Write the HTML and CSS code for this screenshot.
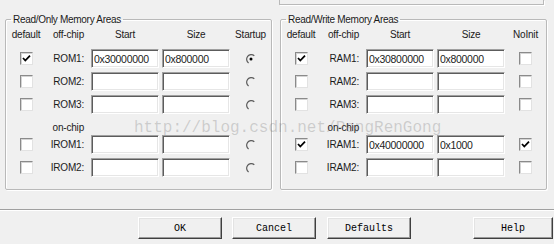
FILE: index.html
```html
<!DOCTYPE html>
<html lang="en">
<head>
    <meta charset="UTF-8">
    <link rel="stylesheet" href="styles.css">
</head>
<body>
<div class="top-rest"></div>

<div class="groups">
	<fieldset class="area">
		<legend>Read/Only Memory Areas</legend>
		<div class="row hdr">
			<span class="c1">default</span>
			<span class="c2">off-chip</span>
			<span class="c3">Start</span>
			<span class="c4">Size</span>
			<span class="c5">Startup</span>
		</div>
		<div class="row">
			<span class="cb on"><svg width="11" height="11" viewBox="0 0 11 11"><path d="M2 5 L4.3 7.5 L9 2.6" stroke="#000" stroke-width="1.8" fill="none"/></svg></span>
			<span class="lbl">ROM1:</span>
			<input class="fld" type="text" value="0x30000000">
			<input class="fld" type="text" value="0x800000">
			<span class="rd sel"><svg width="12" height="12" viewBox="0 0 12 12"><path d="M9.3 2.7 A4.6 4.6 0 1 0 3.6 9.9" stroke="#5a5a5a" stroke-width="1.2" fill="none"/><circle cx="6" cy="6" r="1.5" fill="#000"/></svg></span>
		</div>
		<div class="row">
			<span class="cb"></span>
			<span class="lbl">ROM2:</span>
			<input class="fld" type="text">
			<input class="fld" type="text">
			<span class="rd"><svg width="12" height="12" viewBox="0 0 12 12"><path d="M9.3 2.7 A4.6 4.6 0 1 0 3.6 9.9" stroke="#5a5a5a" stroke-width="1.2" fill="none"/></svg></span>
		</div>
		<div class="row">
			<span class="cb"></span>
			<span class="lbl">ROM3:</span>
			<input class="fld" type="text">
			<input class="fld" type="text">
			<span class="rd"><svg width="12" height="12" viewBox="0 0 12 12"><path d="M9.3 2.7 A4.6 4.6 0 1 0 3.6 9.9" stroke="#5a5a5a" stroke-width="1.2" fill="none"/></svg></span>
		</div>
		<div class="row onchip">
			<span></span>
			<span class="lbl">on-chip</span>
		</div>
		<div class="row">
			<span class="cb"></span>
			<span class="lbl">IROM1:</span>
			<input class="fld" type="text">
			<input class="fld" type="text">
			<span class="rd"><svg width="12" height="12" viewBox="0 0 12 12"><path d="M9.3 2.7 A4.6 4.6 0 1 0 3.6 9.9" stroke="#5a5a5a" stroke-width="1.2" fill="none"/></svg></span>
		</div>
		<div class="row">
			<span class="cb"></span>
			<span class="lbl">IROM2:</span>
			<input class="fld" type="text">
			<input class="fld" type="text">
			<span class="rd"><svg width="12" height="12" viewBox="0 0 12 12"><path d="M9.3 2.7 A4.6 4.6 0 1 0 3.6 9.9" stroke="#5a5a5a" stroke-width="1.2" fill="none"/></svg></span>
		</div>
	</fieldset>

	<fieldset class="area">
		<legend>Read/Write Memory Areas</legend>
		<div class="row hdr">
			<span class="c1">default</span>
			<span class="c2">off-chip</span>
			<span class="c3">Start</span>
			<span class="c4">Size</span>
			<span class="c5">NoInit</span>
		</div>
		<div class="row">
			<span class="cb on"><svg width="11" height="11" viewBox="0 0 11 11"><path d="M2 5 L4.3 7.5 L9 2.6" stroke="#000" stroke-width="1.8" fill="none"/></svg></span>
			<span class="lbl">RAM1:</span>
			<input class="fld" type="text" value="0x30800000">
			<input class="fld" type="text" value="0x800000">
			<span class="cb"></span>
		</div>
		<div class="row">
			<span class="cb"></span>
			<span class="lbl">RAM2:</span>
			<input class="fld" type="text">
			<input class="fld" type="text">
			<span class="cb"></span>
		</div>
		<div class="row">
			<span class="cb"></span>
			<span class="lbl">RAM3:</span>
			<input class="fld" type="text">
			<input class="fld" type="text">
			<span class="cb"></span>
		</div>
		<div class="row onchip">
			<span></span>
			<span class="lbl">on-chip</span>
		</div>
		<div class="row">
			<span class="cb on"><svg width="11" height="11" viewBox="0 0 11 11"><path d="M2 5 L4.3 7.5 L9 2.6" stroke="#000" stroke-width="1.8" fill="none"/></svg></span>
			<span class="lbl">IRAM1:</span>
			<input class="fld" type="text" value="0x40000000">
			<input class="fld" type="text" value="0x1000">
			<span class="cb on"><svg width="11" height="11" viewBox="0 0 11 11"><path d="M2 5 L4.3 7.5 L9 2.6" stroke="#000" stroke-width="1.8" fill="none"/></svg></span>
		</div>
		<div class="row">
			<span class="cb"></span>
			<span class="lbl">IRAM2:</span>
			<input class="fld" type="text">
			<input class="fld" type="text">
			<span class="cb"></span>
		</div>
	</fieldset>
</div>

<div class="sep"></div>

<div class="buttons">
	<button class="btn">OK</button>
	<button class="btn">Cancel</button>
	<button class="btn">Defaults</button>
	<button class="btn help">Help</button>
</div>

<div class="watermark">http://blog.csdn.net/PengRenGong</div>
</body>
</html>
```

FILE: styles.css
```css
body{
	margin:0;
	height:244px;
	overflow:hidden;
	background:#f0f0f0;
	font-family:"Liberation Sans", Arial, sans-serif;
	font-size:10px;
	letter-spacing:-0.2px;
	color:#1b1b1b;
	position:relative;
}
.top-rest{
	margin-left:279px;
	width:265px;
	height:5px;
	box-sizing:border-box;
	border:1px solid #b9b9b9;
	border-top:none;
	box-shadow:1px 1px 0 #fff;
}
.groups{
	display:flex;
	gap:8px;
	padding-left:5px;
	margin-top:8px;
}
.area{
	margin:0;
	width:266px;
	box-sizing:border-box;
	padding:1px 0 10px 0;
	border:1px solid #b9b9b9;
	border-radius:2px;
	box-shadow:1px 1px 0 #fff, inset 1px 1px 0 #fff;
}
legend{
	margin-left:5px;
	padding:0 2px;
	line-height:13px;
	letter-spacing:-0.3px;
}
.row{
	display:grid;
	grid-template-columns:40px 45px 71px 68px 41px;
	align-items:center;
	height:23px;
}
.row.hdr{
	height:14px;
	margin-bottom:6px;
}
.row.onchip{
	height:17px;
}
.onchip .lbl{
	padding-top:5px;
}
.hdr span{
	text-align:center;
}
.hdr .c2, .lbl{
	text-align:right;
	padding-right:7px;
}
.hdr .c3{
	padding-right:3px;
}
.cb{
	justify-self:center;
	width:11px;
	height:11px;
	background:#fff;
	border:1px solid;
	border-color:#8a8a8a #e2e2e2 #e2e2e2 #8a8a8a;
	box-shadow:inset 1px 1px 0 #d4d4d4;
	display:flex;
}
.cb svg{
	display:block;
}
.rd{
	justify-self:center;
	display:flex;
}
.fld{
	width:68px;
	height:19px;
	box-sizing:border-box;
	margin:0;
	padding:0 0 0 2px;
	background:#fff;
	border:1px solid;
	border-color:#a0a0a0 #fff #fff #a0a0a0;
	box-shadow:inset 1px 1px 0 #5c5c5c, inset -1px -1px 0 #e6e6e6;
	font-family:"Liberation Sans", Arial, sans-serif;
	font-size:10.5px;
	letter-spacing:-0.3px;
	color:#222;
	outline:none;
}
.sep{
	margin-top:19px;
	border-top:1px solid #a0a0a0;
	border-bottom:1px solid #fff;
}
.buttons{
	display:flex;
	padding-left:138px;
	margin-top:6px;
}
.btn{
	width:84px;
	height:22px;
	margin:0 10px 0 0;
	padding:0;
	background:#f0f0f0;
	border:1px solid;
	border-color:#fff #3f3f3f #3f3f3f #fff;
	box-shadow:inset -1px -1px 0 #9a9a9a, inset 1px 1px 0 #e3e3e3;
	font-family:"Liberation Mono", "Courier New", monospace;
	font-size:10px;
	letter-spacing:0;
	color:#000;
}
.btn:nth-child(2){
	margin-right:11px;
}
.btn.help{
	width:80px;
	margin-left:52px;
	margin-right:0;
}
.watermark{
	position:absolute;
	left:134px;
	top:120px;
	font-family:"Liberation Mono", "Courier New", monospace;
	font-size:16px;
	line-height:16px;
	letter-spacing:0;
	color:rgba(110,110,110,0.28);
	pointer-events:none;
	white-space:nowrap;
}
```
